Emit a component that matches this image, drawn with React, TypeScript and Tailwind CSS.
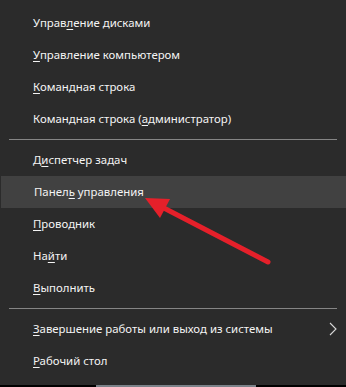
import React from 'react';

type Item = { pre: string; key: string; post: string; active?: boolean; sub?: boolean };

const groups: Item[][] = [
  [
    { pre: 'Управ', key: 'л', post: 'ение дисками' },
    { pre: '', key: 'У', post: 'правление компьютером' },
    { pre: '', key: 'К', post: 'омандная строка' },
    { pre: 'Командная строка (', key: 'а', post: 'дминистратор)' },
  ],
  [
    { pre: 'Д', key: 'и', post: 'спетчер задач' },
    { pre: 'Панел', key: 'ь', post: ' управления', active: true },
    { pre: '', key: 'П', post: 'роводник' },
    { pre: 'На', key: 'й', post: 'ти' },
    { pre: '', key: 'В', post: 'ыполнить' },
  ],
  [
    { pre: '', key: 'З', post: 'авершение работы или выход из системы', sub: true },
    { pre: '', key: 'Р', post: 'абочий стол' },
  ],
];

const Row = ({ item }: { item: Item }) => (
  <div
    className={`flex items-center h-8 pl-[33px] pr-2 text-[11.4px] text-[#f4f4f4] ${
      item.active ? 'bg-[#414141] ml-px' : ''
    }`}
  >
    <span className="flex-1 whitespace-pre">
      {item.pre}
      <u className="underline-offset-2 decoration-1">{item.key}</u>
      {item.post}
    </span>
    {item.sub && (
      <svg width="8" height="14" viewBox="0 0 8 14" className="mr-[1px]">
        <path d="M1 1l6 6-6 6" fill="none" stroke="#d8d8d8" strokeWidth="1.1" />
      </svg>
    )}
  </div>
);

export default function App() {
  return (
    <div
      className="relative w-[346px] h-[387px] bg-[#2b2b2b] flex flex-col overflow-hidden"
      style={{ fontFamily: '"Noto Sans", "Open Sans", sans-serif' }}
    >
      <div className="pt-[7px] flex flex-col flex-1">
        {groups.map((g, gi) => (
          <React.Fragment key={gi}>
            {gi > 0 && (
              <div className="py-1 px-[9px]">
                <div className="h-px bg-[#858585]" />
              </div>
            )}
            {g.map((it, i) => (
              <Row key={i} item={it} />
            ))}
          </React.Fragment>
        ))}
      </div>
      <div className="flex h-[2px]">
        <div className="w-[96px] bg-black" />
        <div className="w-[160px] bg-[#7b8289]" />
        <div className="flex-1 bg-black" />
      </div>
      <svg className="absolute left-0 top-0 pointer-events-none" width="346" height="387">
        <line x1="268" y1="262" x2="160" y2="206" stroke="#e5202a" strokeWidth="5" strokeLinecap="round" />
        <polygon points="145,198 170,199 160,218" fill="#e5202a" />
      </svg>
    </div>
  );
}
